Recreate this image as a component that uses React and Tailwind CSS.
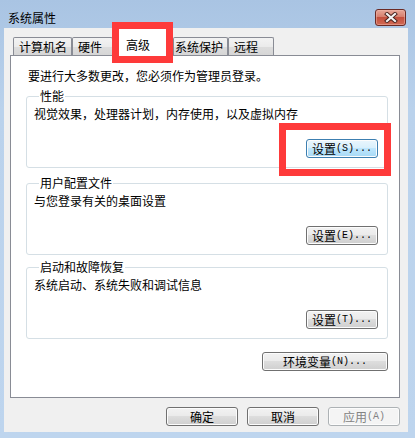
import React from 'react'

const cjk  = "font-['Noto_Sans_CJK_SC',sans-serif]"
const mono = "font-['Liberation_Mono',monospace]"

function Btn({ label, hot, dots = false, w = 'w-[72px]', focus = false, disabled = false }) {
    let look = 'border-[#707070] bg-[linear-gradient(#f2f2f2,#ebebeb_45%,#dddddd_50%,#cfcfcf)] text-black'
    if (focus)    look = 'border-[#3c7fb1] bg-[linear-gradient(#eaf6fd,#d9f0fc_45%,#bee6fd_50%,#a7d9f5)] text-black'
    if (disabled) look = 'border-[#adb2b5] bg-[#f4f4f4] text-[#838383]'

    return (
        <button className={`${w} h-[19px] shrink-0 flex items-center justify-center rounded-[3px] border
            shadow-[inset_0_0_0_1px_#fcfcfc] text-[12px] leading-[16px] ${look}`}>
            <span>{label}</span>
            {hot && (
                <span className={`${mono} text-[10px] leading-[16px] pt-[1px]`}>
                    ({hot}){dots ? '...' : ''}
                </span>
            )}
        </button>
    )
}

function Group({ mt, title, desc, hot }) {
    return (
        <fieldset className={`${mt} ml-[15px] mr-[11px] border border-[#d5dfe5] rounded-[3px] pl-[7px] pr-[9px] pb-[9px]`}>
            <legend className="ml-[5px] px-[1px] text-[12px] leading-[16px]">{title}</legend>
            <p className="mt-[2px] text-[12px] leading-[16px]">{desc}</p>
            <div className="mt-[17px] flex justify-end">
                <Btn label="设置" hot={hot} dots focus={hot === 'S'}/>
            </div>
        </fieldset>
    )
}

function Tab({ label, w, pl = 'pl-[5px]' }) {
    return (
        <div className={`${w} ${pl} h-[18px] border border-b-0 border-[#898c95] rounded-t-[2px]
            bg-[linear-gradient(#f3f3f3,#ebebeb_50%,#dddddd_51%,#d6d6d6)] pt-[1px] text-[12px] leading-[16px]`}>
            {label}
        </div>
    )
}

export default function App() {
    return (
        <div className={`${cjk} relative w-[415px] h-[438px] overflow-hidden flex flex-col
            bg-[linear-gradient(#a9c4e3,#bad2ec_25%,#bed5ee)] text-black`}>

            {/* Title bar */}
            <div className="h-[28px] shrink-0 flex justify-between">
                <span className="pl-[8px] pt-[10px] text-[12px] leading-[16px]">系统属性</span>
                <div className="mt-[9px] mr-[9px] w-[31px] h-[17px] rounded-[3px] border border-[#6b2b25]
                    bg-[linear-gradient(#e8a798,#d7806f_45%,#c4503e_50%,#d06a55)] shadow-[inset_0_0_0_1px_#f0b8ac80]
                    flex items-center justify-center">
                    <svg width="14" height="11" viewBox="0 0 14 11">
                        <path d="M3 2 L11 9 M11 2 L3 9" stroke="#47201b" strokeWidth="4" strokeLinecap="square"/>
                        <path d="M3 2 L11 9 M11 2 L3 9" stroke="#f4f4f4" strokeWidth="2.2" strokeLinecap="square"/>
                    </svg>
                </div>
            </div>

            {/* Client area */}
            <div className="ml-[4px] w-[404px] h-[404px] bg-[#f0f0f0] pt-[9px] pl-[6px] pr-[8px] flex flex-col">

                {/* Tabs */}
                <div className="h-[18px] shrink-0 flex pl-[3px]">
                    <Tab label="计算机名" w="w-[59px]"/>
                    <Tab label="硬件" w="w-[41px]"/>
                    <div className="relative z-10 -mt-[8px] w-[60px] h-[27px] bg-white pl-[13px] pt-[8px] text-[12px] leading-[16px]">
                        高级
                    </div>
                    <Tab label="系统保护" w="w-[55px]" pl="pl-[1px]"/>
                    <Tab label="远程" w="w-[46px]"/>
                </div>

                {/* Panel */}
                <div className="h-[343px] shrink-0 border border-[#898c95] bg-white flex flex-col">
                    <p className="mt-[12px] ml-[17px] text-[12px] leading-[16px]">要进行大多数更改，您必须作为管理员登录。</p>

                    <Group mt="mt-[4px]" title="性能" desc="视觉效果，处理器计划，内存使用，以及虚拟内存" hot="S"/>
                    <Group mt="mt-[7px]" title="用户配置文件" desc="与您登录有关的桌面设置" hot="E"/>
                    <Group mt="mt-[4px]" title="启动和故障恢复" desc="系统启动、系统失败和调试信息" hot="T"/>

                    <div className="mt-[13px] mr-[11px] flex justify-end">
                        <Btn label="环境变量" hot="N" dots w="w-[126px]"/>
                    </div>
                </div>

                {/* Dialog buttons */}
                <div className="mt-[9px] flex justify-end gap-[9px]">
                    <Btn label="确定"/>
                    <Btn label="取消"/>
                    <Btn label="应用" hot="A" disabled/>
                </div>
            </div>

            {/* Red annotation boxes */}
            <div className="absolute left-[112px] top-[22px] w-[61px] h-[41px] border-[7px] border-[#fe3a3a] z-20"/>
            <div className="absolute left-[279px] top-[123px] w-[112px] h-[53px] border-[7px] border-[#fe3a3a] z-20"/>
        </div>
    )
}
